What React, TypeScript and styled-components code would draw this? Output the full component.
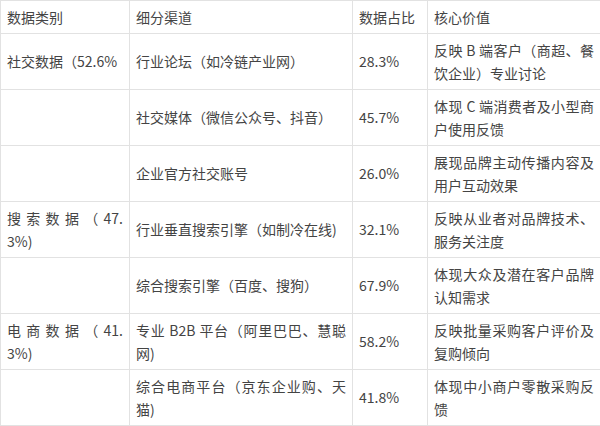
import styled, { createGlobalStyle } from "styled-components";

const GlobalStyle = createGlobalStyle`
  body {
    margin: 0;
    background: #fff;
  }
`;

type Row = {
  // category lines: the reference breaks a few of them mid-number
  category: string[];
  channel: string;
  share: string;
  value: string;
};

const rows: Row[] = [
  {
    category: ["社交数据（52.6%"],
    channel: "行业论坛（如冷链产业网）",
    share: "28.3%",
    value: "反映 B 端客户（商超、餐饮企业）专业讨论",
  },
  {
    category: [],
    channel: "社交媒体（微信公众号、抖音）",
    share: "45.7%",
    value: "体现 C 端消费者及小型商户使用反馈",
  },
  {
    category: [],
    channel: "企业官方社交账号",
    share: "26.0%",
    value: "展现品牌主动传播内容及用户互动效果",
  },
  {
    category: ["搜索数据（47.", "3%)"],
    channel: "行业垂直搜索引擎（如制冷在线)",
    share: "32.1%",
    value: "反映从业者对品牌技术、服务关注度",
  },
  {
    category: [],
    channel: "综合搜索引擎（百度、搜狗）",
    share: "67.9%",
    value: "体现大众及潜在客户品牌认知需求",
  },
  {
    category: ["电商数据（41.", "3%)"],
    channel: "专业 B2B 平台（阿里巴巴、慧聪网)",
    share: "58.2%",
    value: "反映批量采购客户评价及复购倾向",
  },
  {
    category: [],
    channel: "综合电商平台（京东企业购、天猫)",
    share: "41.8%",
    value: "体现中小商户零散采购反馈",
  },
];

const columns = [
  { title: "数据类别", width: 129 },
  { title: "细分渠道", width: 223 },
  { title: "数据占比", width: 75 },
  { title: "核心价值", width: 173 },
];

const App = () => {
  return (
    <>
      <GlobalStyle />
      <Table>
        <colgroup>
          {columns.map((c) => (
            <col key={c.title} style={{ width: c.width }} />
          ))}
        </colgroup>
        <thead>
          <tr>
            {columns.map((c) => (
              <HeadCell key={c.title}>{c.title}</HeadCell>
            ))}
          </tr>
        </thead>
        <tbody>
          {rows.map((r, i) => (
            <BodyRow key={i}>
              <Cell>
                {r.category.map((line, j) => (
                  <Line key={j} $fill={j < r.category.length - 1}>
                    {line}
                  </Line>
                ))}
              </Cell>
              <Cell>{r.channel}</Cell>
              <Cell>{r.share}</Cell>
              <Cell>{r.value}</Cell>
            </BodyRow>
          ))}
        </tbody>
      </Table>
    </>
  );
};

const Table = styled.table`
  width: 600px;
  border-collapse: collapse;
  table-layout: fixed;
  font-family: "Noto Sans CJK SC", "Noto Sans", sans-serif;
  font-size: 14px;
  line-height: 23px;
  color: #444;
`;

const HeadCell = styled.th`
  height: 33px;
  padding: 4px 6px;
  border: 1px solid #e2e2e2;
  font-weight: 400;
  text-align: left;
  vertical-align: middle;
  box-sizing: border-box;
`;

const BodyRow = styled.tr`
  height: 56px;
`;

const Cell = styled.td`
  padding: 4px 6px;
  border: 1px solid #e2e2e2;
  text-align: justify;
  vertical-align: middle;
  word-break: break-all;
  box-sizing: border-box;
`;

const Line = styled.span<{ $fill: boolean }>`
  display: block;
  text-align-last: ${(p) => (p.$fill ? "justify" : "auto")};
`;

export default App;
